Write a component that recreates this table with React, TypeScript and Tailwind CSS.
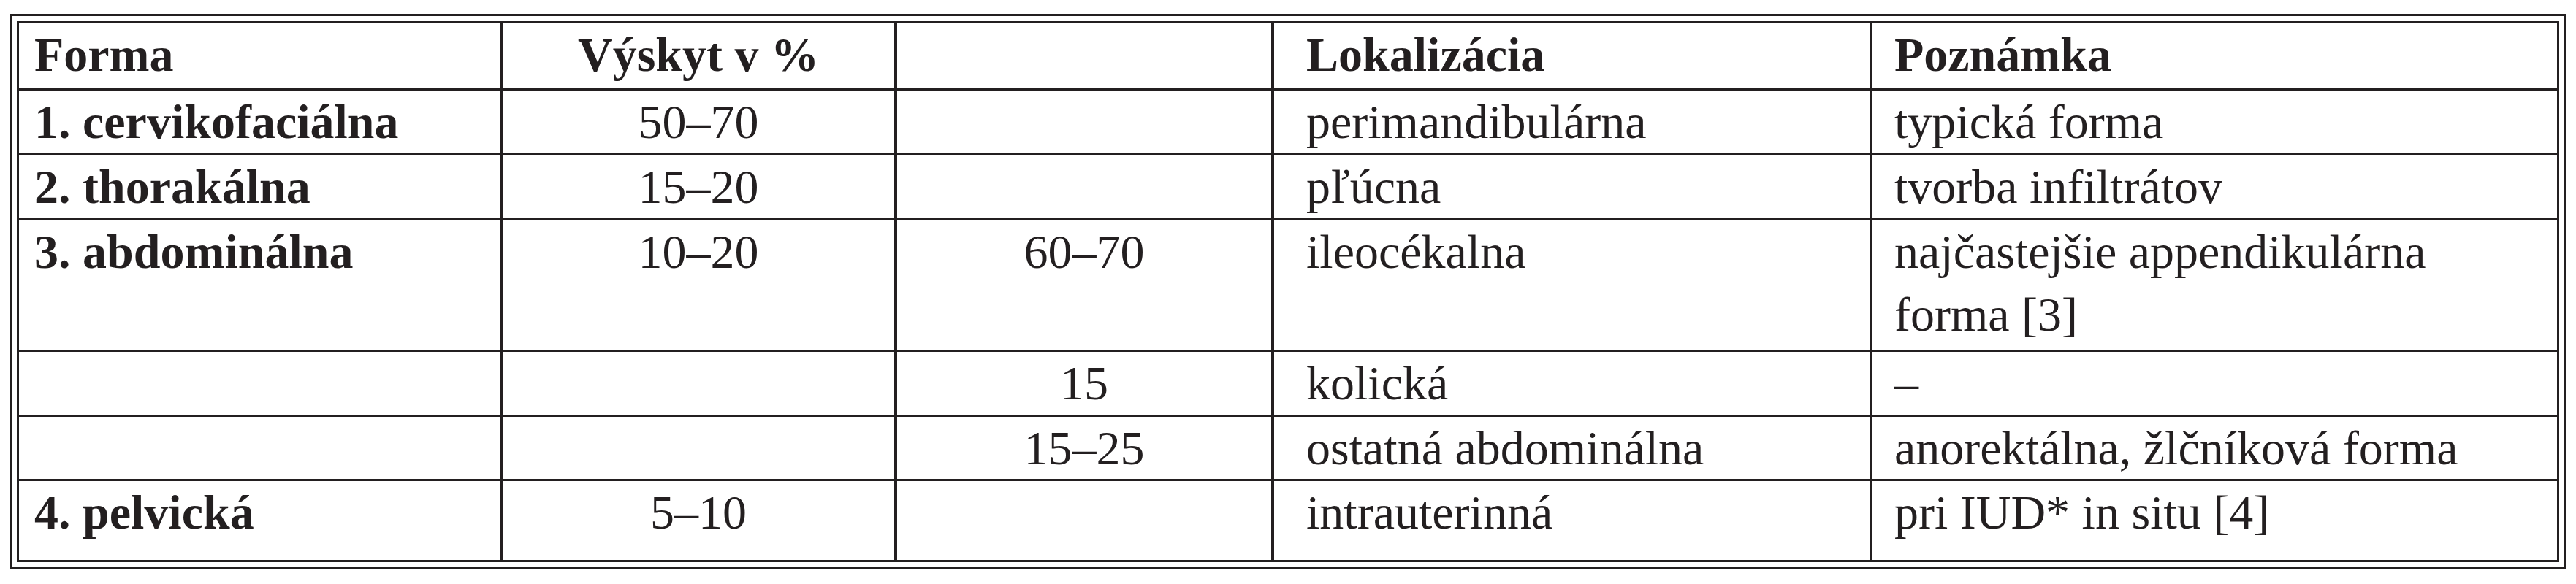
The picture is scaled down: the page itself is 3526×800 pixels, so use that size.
import React from "react";

type Cell = { text: React.ReactNode; bold?: boolean; align: "left" | "center"; pad?: string };

const padFor = ["pl-[21px]", "", "", "pl-[44px]", "pl-[30px]"];

const rows: React.ReactNode[][] = [
  ["Forma", "Výskyt v %", "", "Lokalizácia", "Poznámka"],
  ["1. cervikofaciálna", "50–70", "", "perimandibulárna", "typická forma"],
  ["2. thorakálna", "15–20", "", "pľúcna", "tvorba infiltrátov"],
  [
    "3. abdominálna",
    "10–20",
    "60–70",
    "ileocékalna",
    <>
      najčastejšie appendikulárna
      <br />
      forma [3]
    </>,
  ],
  ["", "", "15", "kolická", "–"],
  ["", "", "15–25", "ostatná abdominálna", "anorektálna, žlčníková forma"],
  ["4. pelvická", "5–10", "", "intrauterinná", "pri IUD* in situ [4]"],
];

export default function App() {
  return (
    <div className="bg-white w-[3526px] h-[800px] pt-[19px] pl-[14px] font-['Liberation_Serif','Times_New_Roman',serif] text-[#231f20]">
      <div className="w-[3498px] border-[3px] border-[#231f20] px-[6px] py-[7px]">
        <div className="grid grid-cols-[658px_536px_512px_815px_937px] grid-rows-[89px_86px_86px_177px_86px_85px_108px] gap-x-[4px] gap-y-[3px] p-[3px] bg-[#231f20]">
          {rows.map((r, ri) =>
            r.map((c, ci) => {
              const bold = ri === 0 || ci === 0;
              const center = ci === 1 || ci === 2;
              return (
                <div
                  key={`${ri}-${ci}`}
                  className={`bg-white text-[66px] leading-[86px] whitespace-nowrap ${bold ? "font-bold" : "font-normal"} ${center ? "text-center" : `text-left ${padFor[ci]}`}`}
                >
                  {c}
                </div>
              );
            })
          )}
        </div>
      </div>
    </div>
  );
}
